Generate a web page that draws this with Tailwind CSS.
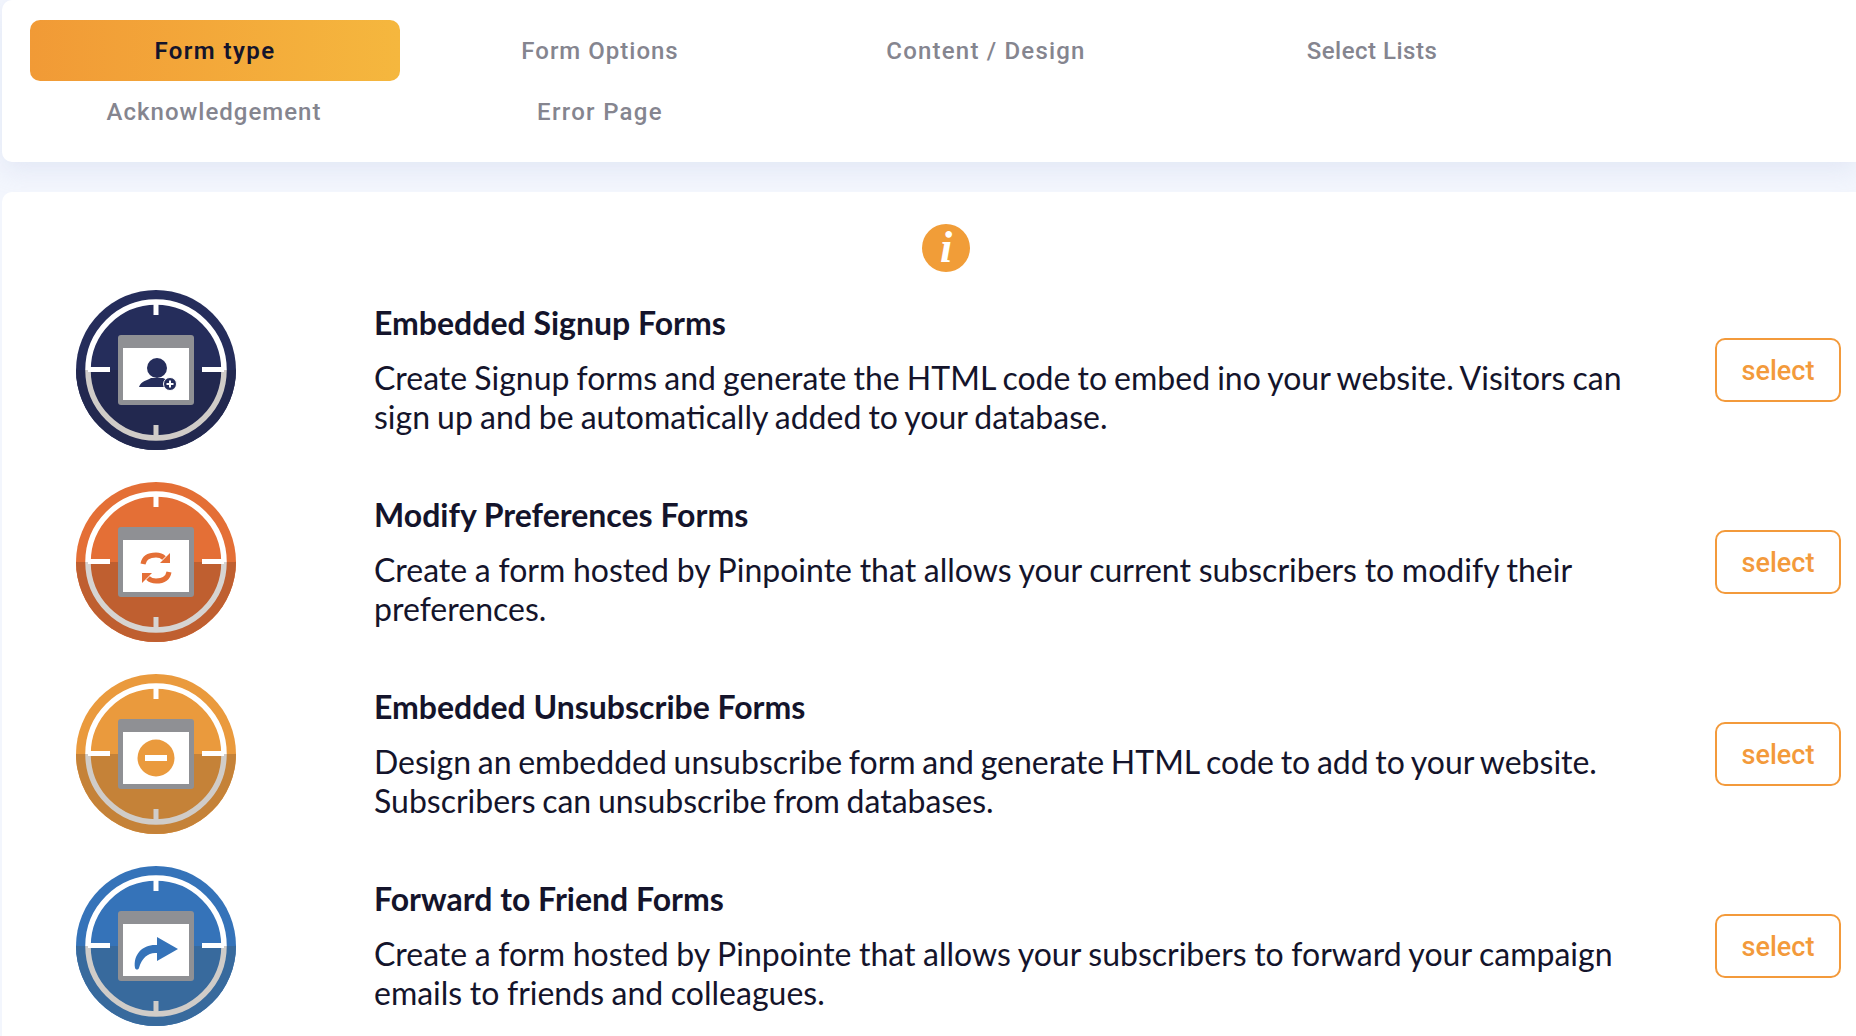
<!DOCTYPE html>
<html>
<head>
<meta charset="utf-8">
<script src="https://cdn.jsdelivr.net/npm/@tailwindcss/browser@4"></script>
</head>
<body class="bg-[#f3f6fd] overflow-hidden font-['Lato',sans-serif]">
<div class="w-[1856px] h-[1036px] overflow-hidden pl-[2px]">
  <nav class="h-[162px] bg-white rounded-l-[10px] pt-[20px] pl-[19px] grid grid-cols-[386px_386px_386px_386px] grid-rows-[61px_61px] shadow-[0_8px_24px_rgba(190,200,230,0.3)] font-['Roboto',sans-serif] text-[24px] font-medium text-[#85858f] text-center tracking-[1px]">
    <a class="ml-[9px] mr-[7px] rounded-[10px] bg-gradient-to-r from-[#f19a36] to-[#f5b73e] text-[#14142b] font-semibold tracking-[1.4px] flex items-center justify-center">Form type</a>
    <a class="flex items-center justify-center">Form Options</a>
    <a class="tracking-[1.2px] flex items-center justify-center">Content / Design</a>
    <a class="tracking-[0.5px] flex items-center justify-center">Select Lists</a>
    <a class="flex items-center justify-center">Acknowledgement</a>
    <a class="tracking-[1.3px] flex items-center justify-center">Error Page</a>
  </nav>
  <main class="mt-[30px] h-[900px] bg-white rounded-l-[10px] pt-[32px]">
    <div class="flex justify-center pl-[34px] h-[50px]">
      <span class="w-[48px] h-[48px] rounded-full bg-[#f19d38] text-white flex items-center justify-center font-['Liberation_Serif',serif] italic font-bold text-[44px] leading-none">i</span>
    </div>

    <section class="h-[192px] flex items-center text-[#14142b]">
      <svg class="ml-[74px] shrink-0" width="160" height="160" viewBox="0 0 160 160">
        <circle cx="80" cy="80" r="80" fill="#252d5b"/>
        <path d="M0 80a80 80 0 0 0 160 0z" fill="#22284f"/>
        <path d="M12 80a68 68 0 0 1 136 0" fill="none" stroke="#fff" stroke-width="5.500"/>
        <path d="M12 80a68 68 0 0 0 136 0" fill="none" stroke="#d0ccc8" stroke-width="5.500"/>
        <path d="M80 12v13M12 79.500h22M126 79.500h22" stroke="#fff" stroke-width="5"/>
        <path d="M80 135v13" stroke="#d0ccc8" stroke-width="5"/>
        <rect x="42" y="45" width="76" height="70" rx="3" fill="#8f9094"/>
        <rect x="47" y="58" width="66" height="52" fill="#fff"/>
        <circle cx="81" cy="78" r="10" fill="#252d5b"/>
        <path d="M63 97c2-6 9-7 12-9h12c4 2 8 4 9 9z" fill="#252d5b"/>
        <circle cx="94" cy="94" r="6.500" fill="#252d5b" stroke="#fff" stroke-width="1"/>
        <path d="M90.500 94h7M94 90.500v7" stroke="#fff" stroke-width="2"/>
      </svg>
      <div class="ml-[138px] w-[1280px] shrink-0 pb-[2px]">
        <h2 class="text-[32px] font-bold leading-[40px] mb-[15px]">Embedded Signup Forms</h2>
        <p class="text-[32px] leading-[39px] [word-spacing:-1.1px]">Create Signup forms and generate the HTML code to embed ino your website. Visitors can sign up and be automatically added to your database.</p>
      </div>
      <button class="ml-[61px] w-[126px] h-[64px] pt-[2px] shrink-0 rounded-[10px] border-2 border-[#f39a3b] text-[#f39a3b] font-['Roboto',sans-serif] font-medium text-[27px]">select</button>
    </section>

    <section class="h-[192px] flex items-center text-[#14142b]">
      <svg class="ml-[74px] shrink-0" width="160" height="160" viewBox="0 0 160 160">
        <circle cx="80" cy="80" r="80" fill="#e46f36"/>
        <path d="M0 80a80 80 0 0 0 160 0z" fill="#bf5f30"/>
        <path d="M12 80a68 68 0 0 1 136 0" fill="none" stroke="#fff" stroke-width="5.500"/>
        <path d="M12 80a68 68 0 0 0 136 0" fill="none" stroke="#d6d4d2" stroke-width="5.500"/>
        <path d="M80 12v13M12 79.500h22M126 79.500h22" stroke="#fff" stroke-width="5"/>
        <path d="M80 135v13" stroke="#d6d4d2" stroke-width="5"/>
        <rect x="42" y="45" width="76" height="70" rx="3" fill="#8f9094"/>
        <rect x="47" y="58" width="66" height="52" fill="#fff"/>
        <path d="M67 82c1-6 6-9 13-9 3 0 6 1 8 3" fill="none" stroke="#e46f36" stroke-width="5"/>
        <path d="M94 71v10h-10z" fill="#e46f36"/>
        <path d="M93 90c-1 6-6 9-13 9-3 0-6-1-8-3" fill="none" stroke="#e46f36" stroke-width="5"/>
        <path d="M66 101V91h10z" fill="#e46f36"/>
      </svg>
      <div class="ml-[138px] w-[1280px] shrink-0 pb-[2px]">
        <h2 class="text-[32px] font-bold leading-[40px] mb-[15px]">Modify Preferences Forms</h2>
        <p class="text-[32px] leading-[39px] [word-spacing:-0.5px]">Create a form hosted by Pinpointe that allows your current subscribers to modify their preferences.</p>
      </div>
      <button class="ml-[61px] w-[126px] h-[64px] pt-[2px] shrink-0 rounded-[10px] border-2 border-[#f39a3b] text-[#f39a3b] font-['Roboto',sans-serif] font-medium text-[27px]">select</button>
    </section>

    <section class="h-[192px] flex items-center text-[#14142b]">
      <svg class="ml-[74px] shrink-0" width="160" height="160" viewBox="0 0 160 160">
        <circle cx="80" cy="80" r="80" fill="#ea9a3d"/>
        <path d="M0 80a80 80 0 0 0 160 0z" fill="#c58238"/>
        <path d="M12 80a68 68 0 0 1 136 0" fill="none" stroke="#fff" stroke-width="5.500"/>
        <path d="M12 80a68 68 0 0 0 136 0" fill="none" stroke="#d0ccc8" stroke-width="5.500"/>
        <path d="M80 12v13M12 79.500h22M126 79.500h22" stroke="#fff" stroke-width="5"/>
        <path d="M80 135v13" stroke="#d0ccc8" stroke-width="5"/>
        <rect x="42" y="45" width="76" height="70" rx="3" fill="#8f9094"/>
        <rect x="47" y="58" width="66" height="52" fill="#fff"/>
        <circle cx="80" cy="84" r="18.500" fill="#ea9a3d"/>
        <rect x="69" y="81" width="22" height="6" fill="#fff"/>
      </svg>
      <div class="ml-[138px] w-[1280px] shrink-0 pb-[2px]">
        <h2 class="text-[32px] font-bold leading-[40px] mb-[15px]">Embedded Unsubscribe Forms</h2>
        <p class="text-[32px] leading-[39px] [word-spacing:-1.5px]">Design an embedded unsubscribe form and generate HTML code to add to your website. Subscribers can unsubscribe from databases.</p>
      </div>
      <button class="ml-[61px] w-[126px] h-[64px] pt-[2px] shrink-0 rounded-[10px] border-2 border-[#f39a3b] text-[#f39a3b] font-['Roboto',sans-serif] font-medium text-[27px]">select</button>
    </section>

    <section class="h-[192px] flex items-center text-[#14142b]">
      <svg class="ml-[74px] shrink-0" width="160" height="160" viewBox="0 0 160 160">
        <circle cx="80" cy="80" r="80" fill="#3573b9"/>
        <path d="M0 80a80 80 0 0 0 160 0z" fill="#386a9d"/>
        <path d="M12 80a68 68 0 0 1 136 0" fill="none" stroke="#fff" stroke-width="5.500"/>
        <path d="M12 80a68 68 0 0 0 136 0" fill="none" stroke="#d0ccc8" stroke-width="5.500"/>
        <path d="M80 12v13M12 79.500h22M126 79.500h22" stroke="#fff" stroke-width="5"/>
        <path d="M80 135v13" stroke="#d0ccc8" stroke-width="5"/>
        <rect x="42" y="45" width="76" height="70" rx="3" fill="#8f9094"/>
        <rect x="47" y="58" width="66" height="52" fill="#fff"/>
        <path d="M59 102c-2-14 8-24 22-23v-8l21 12-21 12v-8c-8-1-15 4-18 15-1 2-3 2-4 0z" fill="#3573b9"/>
      </svg>
      <div class="ml-[138px] w-[1280px] shrink-0 pb-[2px]">
        <h2 class="text-[32px] font-bold leading-[40px] mb-[15px]">Forward to Friend Forms</h2>
        <p class="text-[32px] leading-[39px] [word-spacing:-0.6px]">Create a form hosted by Pinpointe that allows your subscribers to forward your campaign emails to friends and colleagues.</p>
      </div>
      <button class="ml-[61px] w-[126px] h-[64px] pt-[2px] shrink-0 rounded-[10px] border-2 border-[#f39a3b] text-[#f39a3b] font-['Roboto',sans-serif] font-medium text-[27px]">select</button>
    </section>
  </main>
</div>
</body>
</html>
